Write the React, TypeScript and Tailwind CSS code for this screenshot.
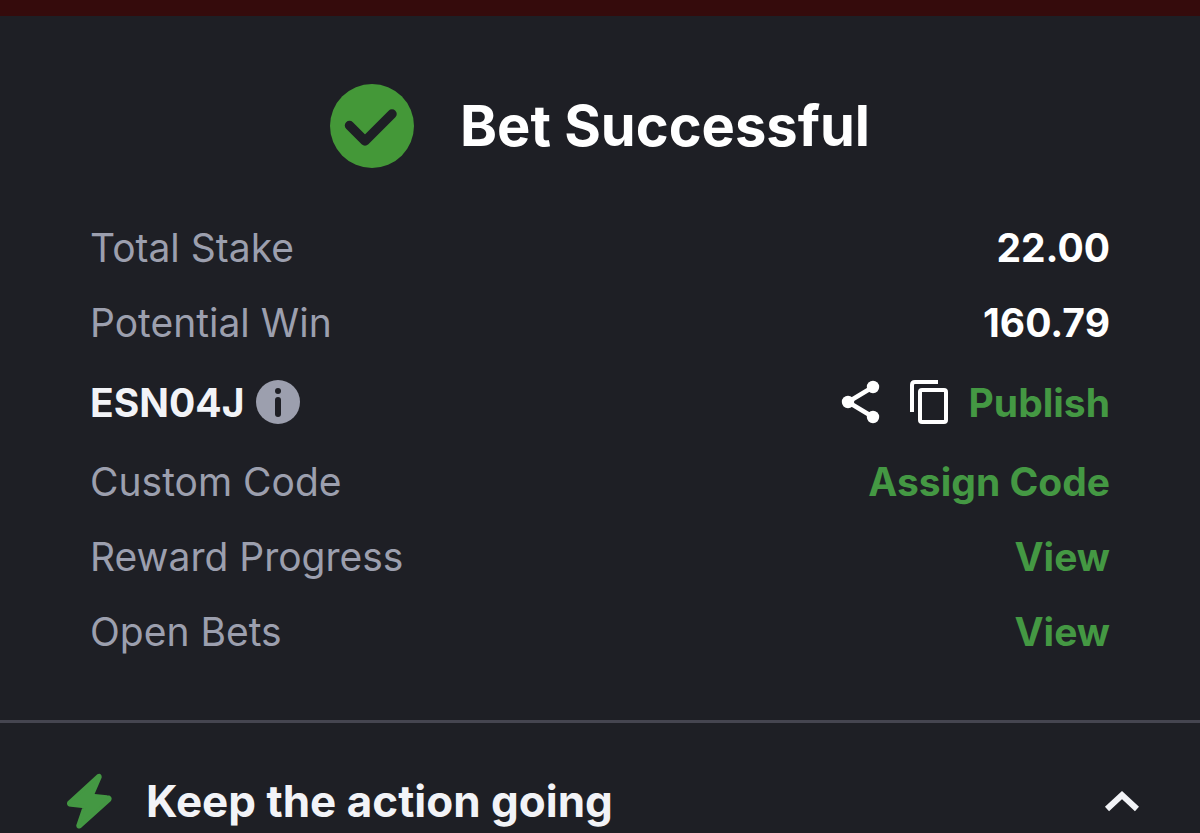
import type { ReactNode } from "react";

const linkStyle = "cursor-pointer font-bold text-[#449843]";

function Row({ label, children }: { label: string; children: ReactNode }) {
    return (
        <div className="flex items-center justify-between">
            <dt className="text-[#9c9fae]">{label}</dt>
            <dd className="font-bold text-white">{children}</dd>
        </div>
    );
}

function CheckIcon() {
    return (
        <svg className="size-[84px]" viewBox="0 0 84 84" fill="none" aria-hidden="true">
            <circle cx="42" cy="42" r="42" fill="#449838" />
            <path d="M19.5 41.5 L35 57 L62 30" stroke="#1e1f25" strokeWidth="9.5" strokeLinecap="round" strokeLinejoin="round" />
        </svg>
    );
}

function InfoIcon() {
    return (
        <svg className="size-11" viewBox="0 0 44 44" aria-hidden="true">
            <circle cx="22" cy="22" r="22" fill="#9c9fae" />
            <circle cx="22" cy="11" r="3" fill="#1e1f25" />
            <rect x="19" y="17" width="6" height="20" rx="3" fill="#1e1f25" />
        </svg>
    );
}

function ShareIcon() {
    return (
        <svg className="h-11 w-10" viewBox="0 0 40 44" fill="white" aria-hidden="true">
            <path d="M32 7 L7 22 L32 37" fill="none" stroke="white" strokeWidth="4.5" />
            <circle cx="32" cy="7" r="6.2" />
            <circle cx="7" cy="22" r="6.2" />
            <circle cx="32" cy="37" r="6.2" />
        </svg>
    );
}

function CopyIcon() {
    return (
        <svg className="h-11 w-10" viewBox="0 0 40 44" fill="none" stroke="white" strokeWidth="4" aria-hidden="true">
            <path d="M3 32 V5 Q3 2 6 2 H29" />
            <rect x="11" y="10" width="26" height="32" rx="2" />
        </svg>
    );
}

function BoltIcon() {
    return (
        <svg className="h-14 w-12" viewBox="0 0 48 56" aria-hidden="true">
            <path
                d="M34 3 L5 29.5 Q4 32 7 32 L20.5 33.5 L14 52.5 Q14 54.5 16 53.5 L45.5 27 Q47 24 43 24 L28 22.5 L36 4 Q36 1.5 34 3 Z"
                fill="#449843"
                stroke="#449843"
                strokeWidth="3.5"
                strokeLinejoin="round"
            />
        </svg>
    );
}

export default function App() {
    return (
        <div className="min-h-screen bg-[#1e1f25] font-['Inter',sans-serif]">
            {/* Edge of the page behind the sheet */}
            <div className="h-4 bg-[#350b0c]"></div>

            <main className="border-b-3 border-[#454550] px-[90px] pt-[68px] pb-[65px]">
                <div className="flex items-center justify-center gap-[46px]">
                    <CheckIcon />
                    <h1 className="text-[56px] leading-[84px] font-bold text-white">Bet Successful</h1>
                </div>

                {/* Bet details */}
                <dl className="mt-14 flex flex-col gap-7 text-[39px] leading-[47px]">
                    <Row label="Total Stake">22.00</Row>
                    <Row label="Potential Win">160.79</Row>
                    <div className="flex h-14 items-center justify-between">
                        <dt className="flex items-center gap-3 font-bold text-[#f2f3f7]">
                            ESN04J
                            <button type="button" aria-label="About this code" className="cursor-pointer"><InfoIcon /></button>
                        </dt>
                        <dd className="flex items-center">
                            <button type="button" aria-label="Share" className="cursor-pointer"><ShareIcon /></button>
                            <button type="button" aria-label="Copy" className="ml-7 cursor-pointer"><CopyIcon /></button>
                            <button type="button" className={`ml-5 ${linkStyle}`}>Publish</button>
                        </dd>
                    </div>
                    <Row label="Custom Code"><button type="button" className={linkStyle}>Assign Code</button></Row>
                    <Row label="Reward Progress"><button type="button" className={linkStyle}>View</button></Row>
                    <Row label="Open Bets"><button type="button" className={linkStyle}>View</button></Row>
                </dl>
            </main>

            {/* Expandable section */}
            <button type="button" aria-expanded="true" className="flex w-full cursor-pointer items-center pt-[50px] pr-[61px] pb-[3px] pl-16 text-left text-[#f2f3f7]">
                <BoltIcon />
                <span className="ml-[34px] text-[44px] leading-14 font-bold">Keep the action going</span>
                <svg className="ml-auto h-6 w-9" viewBox="0 0 36 24" fill="none" stroke="currentColor" strokeWidth="6" aria-hidden="true">
                    <path d="M4 20 L19 6 L34 20" />
                </svg>
            </button>
        </div>
    );
}
